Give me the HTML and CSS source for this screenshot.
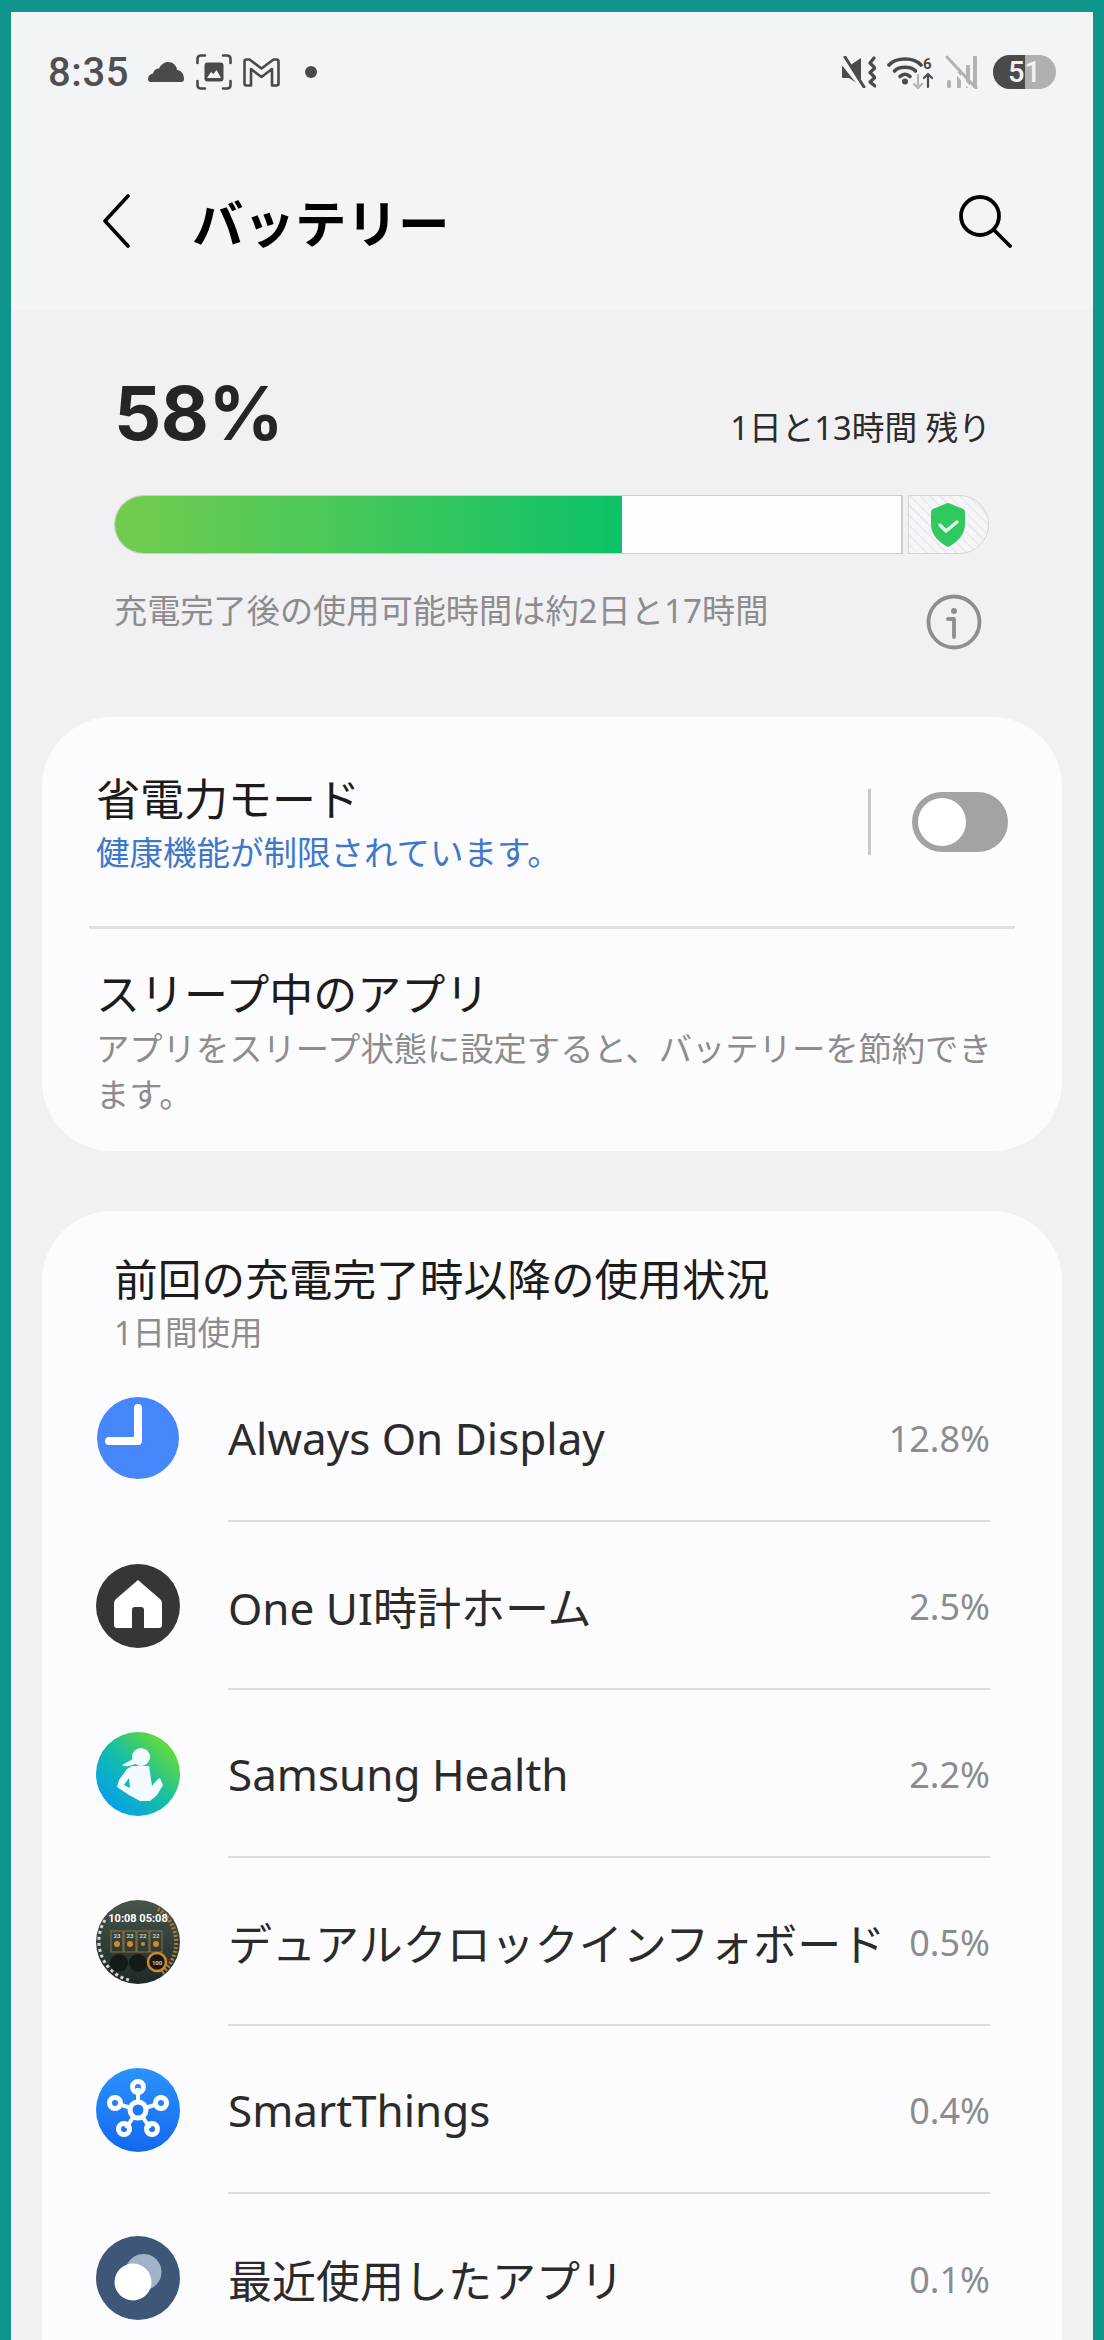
FILE: index.html
```html
<!DOCTYPE html>
<html lang="ja">

<head>
	<meta charset="UTF-8">
	<title>バッテリー</title>
	<link rel="stylesheet" href="styles.css">
</head>

<body>
	<div class="screen">

		<div class="statusbar">
			<span class="clock">8:35</span>
			<svg class="ic ic-cloud" viewBox="0 0 36 20"><path fill="#4a4a4c" d="M3 20a3 3 0 0 1-3-3c0-3 2-5 5-5.500C6 8 8 6.500 11 6.500 13 2.500 16.500 0 20 0c5 0 8.500 3.500 9 8 4 .5 7 3.500 7 9a3 3 0 0 1-3 3z"/></svg>
			<svg class="ic ic-frame" viewBox="0 0 36 36" fill="none" stroke="#4a4a4c" stroke-width="2.600" stroke-linecap="round"><path d="M1.500 9V5q0-3.500 3.500-3.500h4M27 1.500h4q3.500 0 3.500 3.500v4M1.500 27v4q0 3.500 3.500 3.500h4M27 34.500h4q3.500 0 3.500-3.500v-4"/><rect x="8.500" y="8.500" width="19" height="19" rx="3" fill="#4a4a4c" stroke="none"/><path fill="#f3f4f6" stroke="none" d="M11 24l4-6 2.500 2 3-4 4.500 8z"/></svg>
			<svg class="ic ic-gmail" viewBox="0 0 37 29"><path fill="none" stroke="#4a4a4c" stroke-width="2.600" stroke-linejoin="round" d="M1.500 3.500q0-2 2-2h3L18.500 10.500 30.500 1.500h3q2 0 2 2v22q0 2-2 2H29V11L18.500 19 8 11v16.500H3.500q-2 0-2-2z"/></svg>
			<span class="dot"></span>
			<span class="spring"></span>
			<svg class="ic ic-mute" viewBox="0 0 34 32"><path fill="#4a4a4c" d="M0 11q0-1 1-1h6L19 2v28L7 22H1q-1 0-1-1z"/><path fill="none" stroke="#f3f4f6" stroke-width="6" d="M-1 3l22 28"/><path fill="none" stroke="#4a4a4c" stroke-width="3" stroke-linecap="round" d="M3 1l19 30"/><path fill="none" stroke="#4a4a4c" stroke-width="3.200" stroke-linecap="round" stroke-linejoin="round" d="M32 2l-4 5 5 5-5 4.500 5 5-5 4.500 5 4"/></svg>
			<svg class="ic ic-wifi" viewBox="0 0 47 34"><g fill="none" stroke="#4a4a4c" stroke-width="3.600" stroke-linecap="round"><path d="M2 10C9 2 27 2 34 10"/><path d="M7.500 16C12 11 24 11 28.500 16"/><path d="M13 21.500c3-3 7-3 10 0"/></g><circle cx="18" cy="26.500" r="3" fill="#4a4a4c"/><text x="36" y="14" class="wifi-six">6</text><path fill="none" stroke="#4a4a4c" stroke-width="2.200" stroke-linecap="round" stroke-linejoin="round" d="M41 32V19m-4 4l4-4 4 4"/><path fill="none" stroke="#b4b4b6" stroke-width="2.200" stroke-linecap="round" stroke-linejoin="round" d="M31 20v13m-4-4l4 4 4-4"/></svg>
			<svg class="ic ic-signal" viewBox="0 0 33 34"><g fill="#b2b2b4"><rect x="2" y="25" width="4" height="8" rx="1.500"/><rect x="12" y="17" width="4" height="16" rx="1"/><rect x="21" y="10" width="4" height="23" rx="1"/><rect x="28" y="1" width="4" height="32" rx="1"/></g><path stroke="#f3f4f6" stroke-width="3" d="M-2 4l32 34"/><path stroke="#b2b2b4" stroke-width="3" stroke-linecap="round" d="M2 2l29 31"/></svg>
			<span class="batt"><span class="batt-dark"></span><span class="batt-num">51</span></span>
		</div>

		<div class="topbar">
			<svg class="back" viewBox="0 0 28 54" fill="none" stroke="#000" stroke-width="3.600" stroke-linecap="round" stroke-linejoin="round"><path d="M26 2L3 27l23 25"/></svg>
			<h1 class="title">バッテリー</h1>
			<svg class="search" viewBox="0 0 54 54" fill="none" stroke="#000" stroke-width="3.800" stroke-linecap="round"><circle cx="22" cy="22" r="19"/><path d="M36 36l16 16"/></svg>
		</div>

		<div class="summary">
			<div class="level-row">
				<span class="level">58%</span>
				<span class="remain">1日と13時間 残り</span>
			</div>
			<div class="bar-row">
				<div class="bar"><div class="bar-fill"></div></div>
				<div class="bar-safe">
					<svg class="shield" viewBox="0 0 34 44"><path fill="#2fc95f" d="M17 0q1 0 2 .6L32 6q2 1 2 3v12c0 11-8 18-16 22.600q-1 .4-2 0C8 39 0 32 0 21V9q0-2 2-3L15 .6q1-.6 2-.6z"/><path fill="none" stroke="#e4f8ea" stroke-width="3.400" stroke-linecap="round" stroke-linejoin="round" d="M9 22l6 6 11-9"/></svg>
				</div>
			</div>
			<div class="note-row">
				<span class="note">充電完了後の使用可能時間は約2日と17時間</span>
				<svg class="info" viewBox="0 0 56 56" fill="none" stroke="#8e8e90" stroke-width="3.800"><circle cx="28" cy="28" r="25.500"/><circle cx="28" cy="17" r="3" fill="#8e8e90" stroke="none"/><path stroke-linecap="round" stroke-linejoin="round" d="M22 25h6v18"/></svg>
			</div>
		</div>

		<div class="card">
			<div class="mode-row">
				<div class="mode-text">
					<div class="item-title">省電力モード</div>
					<div class="item-warn">健康機能が制限されています。</div>
				</div>
				<span class="vline"></span>
				<span class="toggle"><span class="knob"></span></span>
			</div>
			<div class="card-line"></div>
			<div class="sleep-row">
				<div class="item-title">スリープ中のアプリ</div>
				<div class="item-desc">アプリをスリープ状態に設定すると、バッテリーを節約できます。</div>
			</div>
		</div>

		<div class="card usage">
			<div class="usage-head">
				<div class="item-title">前回の充電完了時以降の使用状況</div>
				<div class="usage-sub">1日間使用</div>
			</div>

			<div class="app">
				<svg class="app-icon" viewBox="0 0 84 84"><circle cx="42" cy="42" r="41" fill="#4688fb"/><path fill="none" stroke="#fff" stroke-width="8" stroke-linecap="round" stroke-linejoin="round" d="M42 12v33H13"/></svg>
				<div class="app-body"><span class="app-name">Always On Display</span><span class="app-pct">12.8%</span></div>
			</div>
			<div class="app">
				<svg class="app-icon" viewBox="0 0 84 84"><circle cx="42" cy="42" r="42" fill="#363636"/><path fill="#fff" d="M42 16L64 35q2 2 2 4v22q0 3-3 3H48V46q0-3-3-3h-6q-3 0-3 3v18H21q-3 0-3-3V39q0-2 2-4z"/></svg>
				<div class="app-body"><span class="app-name">One UI時計ホーム</span><span class="app-pct">2.5%</span></div>
			</div>
			<div class="app">
				<svg class="app-icon" viewBox="0 0 84 84"><defs><linearGradient id="health" x1="0.100" y1="0.900" x2="0.900" y2="0.100"><stop offset="0" stop-color="#069cf2"/><stop offset=".5" stop-color="#14bfa6"/><stop offset="1" stop-color="#70de2c"/></linearGradient></defs><circle cx="42" cy="42" r="42" fill="url(#health)"/><circle cx="45" cy="25" r="9" fill="#f2fbff"/><path fill="#f2fbff" d="M37 27l-11 6q3 2 7 1l7-2z"/><path fill="#f2fbff" d="M36 34h17l3 20 5-6 3-2 3 7-6 10-7 6H44l-11-6-12-8 2-7 8-11zM33 46l-5 7 6 3z"/></svg>
				<div class="app-body"><span class="app-name">Samsung Health</span><span class="app-pct">2.2%</span></div>
			</div>
			<div class="app">
				<svg class="app-icon" viewBox="0 0 84 84"><defs><linearGradient id="face" x1="0" y1="0" x2="0" y2="1"><stop offset="0" stop-color="#47554b"/><stop offset="1" stop-color="#1e2a28"/></linearGradient></defs><circle cx="42" cy="42" r="42" fill="url(#face)"/><path fill="none" stroke="#b27a30" stroke-width="4" stroke-dasharray="2 2" d="M62 9a40 40 0 0 1 4 64"/><path fill="none" stroke="#d8d8d0" stroke-width="3" stroke-dasharray="3 3" d="M9 20a40 40 0 0 0 24 60"/><text x="42" y="22" class="face-time">10:08 05:08</text><g fill="none" stroke="#a9803d" stroke-width=".8"><rect x="15" y="31" width="12" height="21"/><rect x="28" y="31" width="12" height="21"/><rect x="41" y="31" width="12" height="21"/><rect x="54" y="31" width="12" height="21"/></g><text x="21" y="38" class="face-temp">23</text><text x="34" y="38" class="face-temp">23</text><text x="47" y="38" class="face-temp">22</text><text x="60" y="38" class="face-temp">22</text><g fill="#d08a2e"><circle cx="21" cy="44" r="3"/><circle cx="34" cy="44" r="3"/><circle cx="47" cy="44" r="2"/><circle cx="60" cy="44" r="3"/></g><circle cx="23" cy="63" r="9" fill="#151a18"/><circle cx="42" cy="63" r="9" fill="#151a18"/><circle cx="61" cy="62" r="9" fill="#151a18" stroke="#d08a2e" stroke-width="2.500"/><text x="61" y="65" class="face-temp">100</text></svg>
				<div class="app-body"><span class="app-name">デュアルクロックインフォボード</span><span class="app-pct">0.5%</span></div>
			</div>
			<div class="app">
				<svg class="app-icon" viewBox="0 0 84 84"><defs><linearGradient id="things" x1="0" y1="0" x2="0" y2="1"><stop offset="0" stop-color="#2a93fa"/><stop offset="1" stop-color="#1468f0"/></linearGradient></defs><circle cx="42" cy="42" r="42" fill="url(#things)"/><g fill="none" stroke="#fff" stroke-width="5"><path d="M42 42V20M42 42L22 36M42 42L62 36M42 42L30 60M42 42L54 60" stroke-width="4"/><circle cx="42" cy="19" r="5.500"/><circle cx="19" cy="35" r="5.500"/><circle cx="65" cy="35" r="5.500"/><circle cx="28" cy="61" r="5.500"/><circle cx="56" cy="61" r="5.500"/></g><circle cx="42" cy="42" r="8" fill="#1c7cf4" stroke="#fff" stroke-width="5"/></svg>
				<div class="app-body"><span class="app-name">SmartThings</span><span class="app-pct">0.4%</span></div>
			</div>
			<div class="app">
				<svg class="app-icon" viewBox="0 0 84 84"><circle cx="42" cy="42" r="42" fill="#3e5678"/><circle cx="47.500" cy="36" r="18" fill="#9fb4c6"/><circle cx="37" cy="46" r="18.500" fill="#fff"/></svg>
				<div class="app-body"><span class="app-name">最近使用したアプリ</span><span class="app-pct">0.1%</span></div>
			</div>
		</div>

	</div>
</body>

</html>
```

FILE: styles.css
```css
* { box-sizing: border-box; }

html, body { margin: 0; height: 2340px; overflow: hidden; }

body {
	background-color: #0f968c;
	padding: 12px 11px 0;
	font-family: "Noto Sans", "Noto Sans CJK JP", sans-serif;
}

.screen {
	height: 2328px;
	background-color: #f1f1f3;
	overflow: hidden;
}

.statusbar {
	display: flex;
	align-items: center;
	height: 120px;
	padding: 0 37px;
	background-color: #f3f4f6;
}

.clock {
	font: 500 40px Roboto, sans-serif;
	color: #505052;
	letter-spacing: .6px;
	margin-right: 19px;
}

.ic { flex: none; display: block; }
.ic-cloud { width: 36px; height: 20px; }
.ic-frame { width: 36px; height: 36px; margin-left: 12px; }
.ic-gmail { width: 37px; height: 29px; margin-left: 11px; }
.ic-mute { width: 34px; height: 32px; }
.ic-wifi { width: 47px; height: 34px; margin-left: 11px; }
.ic-signal { width: 33px; height: 34px; margin-left: 11px; }

.wifi-six { font: 700 15px Roboto, sans-serif; fill: #4a4a4c; text-anchor: start; }

.dot {
	width: 12px;
	height: 12px;
	margin-left: 25px;
	border-radius: 50%;
	background-color: #4a4a4c;
}

.spring { flex: 1; }

.batt {
	position: relative;
	width: 63px;
	height: 34px;
	margin-left: 15px;
	border-radius: 17px;
	background-color: #b0b0b2;
	overflow: hidden;
	text-align: center;
}

.batt-dark {
	position: absolute;
	left: 0;
	top: 0;
	bottom: 0;
	width: 32px;
	background-color: #4a4a4c;
}

.batt-num {
	position: relative;
	font: 500 29px/34px Roboto, sans-serif;
	color: #f2f2f2;
}

.topbar {
	display: flex;
	align-items: center;
	height: 178px;
	padding: 0 81px 0 91px;
	background-color: #f3f4f6;
}

.back { width: 28px; height: 54px; flex: none; }

.title {
	flex: 1;
	margin: 3px 0 0 62px;
	font-size: 51.500px;
	font-weight: 700;
	line-height: 60px;
	color: #000;
}

.search { width: 54px; height: 54px; flex: none; }

.summary { padding: 0 102px 0 103px; height: 407px; }

.level-row {
	display: flex;
	justify-content: space-between;
	align-items: flex-end;
	padding-top: 36px;
	height: 161px;
}

.level {
	font: 700 74px/92px Inter, sans-serif;
	color: #252525;
	letter-spacing: -.5px;
	margin-bottom: 12px;
}

.remain {
	font-size: 32.700px;
	line-height: 46px;
	margin-bottom: 20px;
	color: #2b2b2b;
}

.bar-row {
	display: flex;
	gap: 5px;
	height: 59px;
	margin-top: 24px;
}

.bar {
	width: 789px;
	border: 1.500px solid #ccccd2;
	border-right-width: 2px;
	border-radius: 30px 0 0 30px;
	background-color: #fdfdff;
	overflow: hidden;
}

.bar-fill {
	width: 507px;
	height: 100%;
	background: linear-gradient(90deg, #72cc4e 0%, #4cc858 40%, #0cc167 100%);
}

.bar-safe {
	width: 81px;
	display: flex;
	align-items: center;
	justify-content: center;
	padding-right: 1px;
	border: 1.500px solid #d4d4d8;
	border-radius: 0 30px 30px 0;
	background: repeating-linear-gradient(45deg, #f6f6f8 0 5px, #ebebef 5px 7px);
}

.shield { width: 34px; height: 44px; }

.note-row {
	display: flex;
	justify-content: space-between;
	margin-top: 33px;
}

.note {
	font-size: 33.200px;
	line-height: 48px;
	color: #8c8c8e;
}

.info { width: 56px; height: 56px; margin: 7px 9px 0 0; flex: none; }

.card {
	margin: 0 31px;
	border-radius: 70px;
	background-color: #fcfcfe;
}

.mode-row {
	display: flex;
	align-items: center;
	height: 209px;
	padding: 0 54px;
}

.mode-text { flex: 1; }

.item-title {
	font-size: 44px;
	font-weight: 400;
	line-height: 59px;
	color: #1c1c1c;
}

.item-warn {
	margin-top: 1px;
	font-size: 33.500px;
	line-height: 44px;
	color: #3f78c8;
}

.vline {
	width: 3px;
	height: 66px;
	margin-right: 41px;
	background-color: #c9c9cb;
}

.toggle {
	position: relative;
	width: 96px;
	height: 60px;
	border-radius: 30px;
	background-color: #a3a3a5;
}

.knob {
	position: absolute;
	left: 6px;
	top: 6px;
	width: 48px;
	height: 48px;
	border-radius: 50%;
	background-color: #fff;
}

.card-line {
	height: 3px;
	margin: 0 47px;
	background-color: #e0e0e2;
}

.sleep-row { padding: 36px 54px 0; height: 222px; }

.item-desc {
	margin-top: 1px;
	font-size: 33.300px;
	line-height: 46px;
	color: #8c8c8e;
}

.usage { margin-top: 60px; padding: 39px 72px 0 54px; height: 1200px; }

.usage-head { padding-left: 18px; height: 104px; }

.usage-head .item-title { font-size: 43.700px; }

.usage-sub {
	font-size: 32.500px;
	line-height: 48px;
	color: #8c8c8e;
}

.app {
	display: flex;
	align-items: center;
	height: 168px;
}

.app-icon { width: 84px; height: 84px; flex: none; margin-right: 48px; }

.app-body {
	flex: 1;
	display: flex;
	align-items: center;
	justify-content: space-between;
	height: 100%;
	padding-top: 2px;
	border-bottom: 2px solid #dcdcde;
}

.app:last-child .app-body { border-bottom: 0; }

.app-name {
	font-size: 44px;
	color: #2b2b2b;
	white-space: nowrap;
}

.app-pct {
	font-size: 36px;
	color: #8c8c8e;
}

.face-time { font: 700 11px Roboto, sans-serif; fill: #fff; text-anchor: middle; }
.face-temp { font: 500 6px Roboto, sans-serif; fill: #e8e4d8; text-anchor: middle; }
```
